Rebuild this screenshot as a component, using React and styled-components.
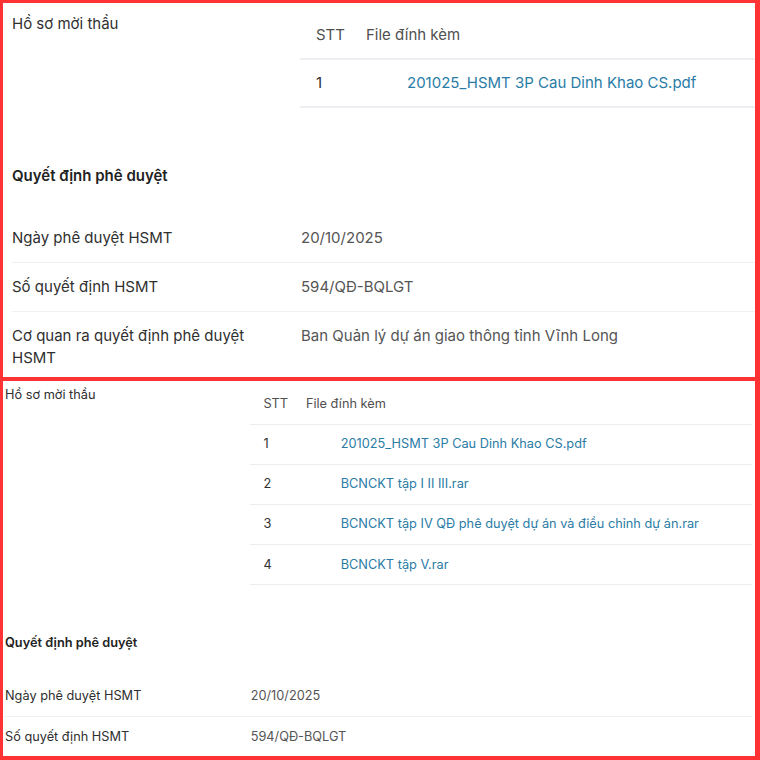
import React from 'react'
import styled, { createGlobalStyle } from 'styled-components'

const GlobalStyle = createGlobalStyle`
  html, body {
    margin: 0;
    padding: 0;
    background: #fff;
  }
  body {
    font-family: Inter, "Noto Sans", "Liberation Sans", sans-serif;
    -webkit-font-smoothing: antialiased;
  }
`

const files = [
    '201025_HSMT 3P Cau Dinh Khao CS.pdf',
    'BCNCKT tập I II III.rar',
    'BCNCKT tập IV QĐ phê duyệt dự án và điều chỉnh dự án.rar',
    'BCNCKT tập V.rar',
]

const fields = [
    ['Ngày phê duyệt HSMT', '20/10/2025'],
    ['Số quyết định HSMT', '594/QĐ-BQLGT'],
    ['Cơ quan ra quyết định phê duyệt HSMT', 'Ban Quản lý dự án giao thông tỉnh Vĩnh Long'],
]

const Sheet = ({ scale, inset, files, fields }) => {
    return (
        <Panel $s={scale} $inset={inset}>
            <AttachRow>
                <Label>Hồ sơ mời thầu</Label>
                <FileTable>
                    <thead>
                        <tr>
                            <HeadCell $stt>STT</HeadCell>
                            <HeadCell>File đính kèm</HeadCell>
                        </tr>
                    </thead>
                    <tbody>
                        {files.map((f, i) => (
                            <tr key={f}>
                                <Cell $stt>{i + 1}</Cell>
                                <Cell>
                                    <FileLink href="#">{f}</FileLink>
                                </Cell>
                            </tr>
                        ))}
                    </tbody>
                </FileTable>
            </AttachRow>

            <Heading>Quyết định phê duyệt</Heading>

            {fields.map(([label, value]) => (
                <Field key={label}>
                    <FieldLabel>{label}</FieldLabel>
                    <Value>{value}</Value>
                </Field>
            ))}
        </Panel>
    )
}

const App = () => {
    return (
        <>
            <GlobalStyle />
            <Frame>
                <Sheet scale={1} inset="9px 0 0 9px" files={files.slice(0, 1)} fields={fields} />
                <Divider />
                <Sheet scale={0.85} inset="4px 3px 0 2px" files={files} fields={fields.slice(0, 2)} />
            </Frame>
        </>
    )
}

export default App

const Frame = styled.div`
    width: 760px;
    height: 760px;
    box-sizing: border-box;
    border-style: solid;
    border-color: #ff3333;
    border-width: 3px 5px 4px 3px;
    display: grid;
    grid-template-rows: 374px 4px 1fr;
    background: #fff;
`

const Divider = styled.div`
    background: #ff3333;
`

const Panel = styled.section`
    --s: ${p => p.$s};
    padding: ${p => p.$inset};
    overflow: hidden;
    color: #303030;
    font-size: calc(15px * var(--s));
    line-height: calc(22px * var(--s));
`

const AttachRow = styled.div`
    display: grid;
    grid-template-columns: calc(288px * var(--s)) 1fr;
    align-items: start;
`

const Label = styled.div`
    color: #2f2f2f;
    padding-top: calc(1px * var(--s));
`

const FileTable = styled.table`
    width: 100%;
    border-collapse: collapse;
`

const HeadCell = styled.th`
    text-align: left;
    font-weight: 400;
    color: #4f4f4f;
    width: ${p => (p.$stt ? 'calc(34px * var(--s))' : 'auto')};
    padding: calc(12px * var(--s)) 0 calc(12px * var(--s)) calc(16px * var(--s));
    border-bottom: calc(2px * var(--s)) solid #eceef1;
`

const Cell = styled.td`
    color: #303030;
    padding: calc(12px * var(--s)) 0 calc(12px * var(--s))
        ${p => (p.$stt ? 'calc(16px * var(--s))' : 'calc(57px * var(--s))')};
    border-bottom: calc(2px * var(--s)) solid #eceef1;
    white-space: nowrap;
`

const FileLink = styled.a`
    color: #2a7ca6;
    text-decoration: none;
`

const Heading = styled.h3`
    margin: calc(57px * var(--s)) 0 calc(27px * var(--s));
    font-size: inherit;
    line-height: inherit;
    font-weight: 600;
    color: #222;
`

const Field = styled.div`
    display: grid;
    grid-template-columns: calc(289px * var(--s)) 1fr;
    padding: calc(13px * var(--s)) 0;
    border-bottom: 1px solid #f0f0f0;
`

const FieldLabel = styled.div`
    color: #2f2f2f;
    padding-right: calc(40px * var(--s));
`

const Value = styled.div`
    color: #555;
`
